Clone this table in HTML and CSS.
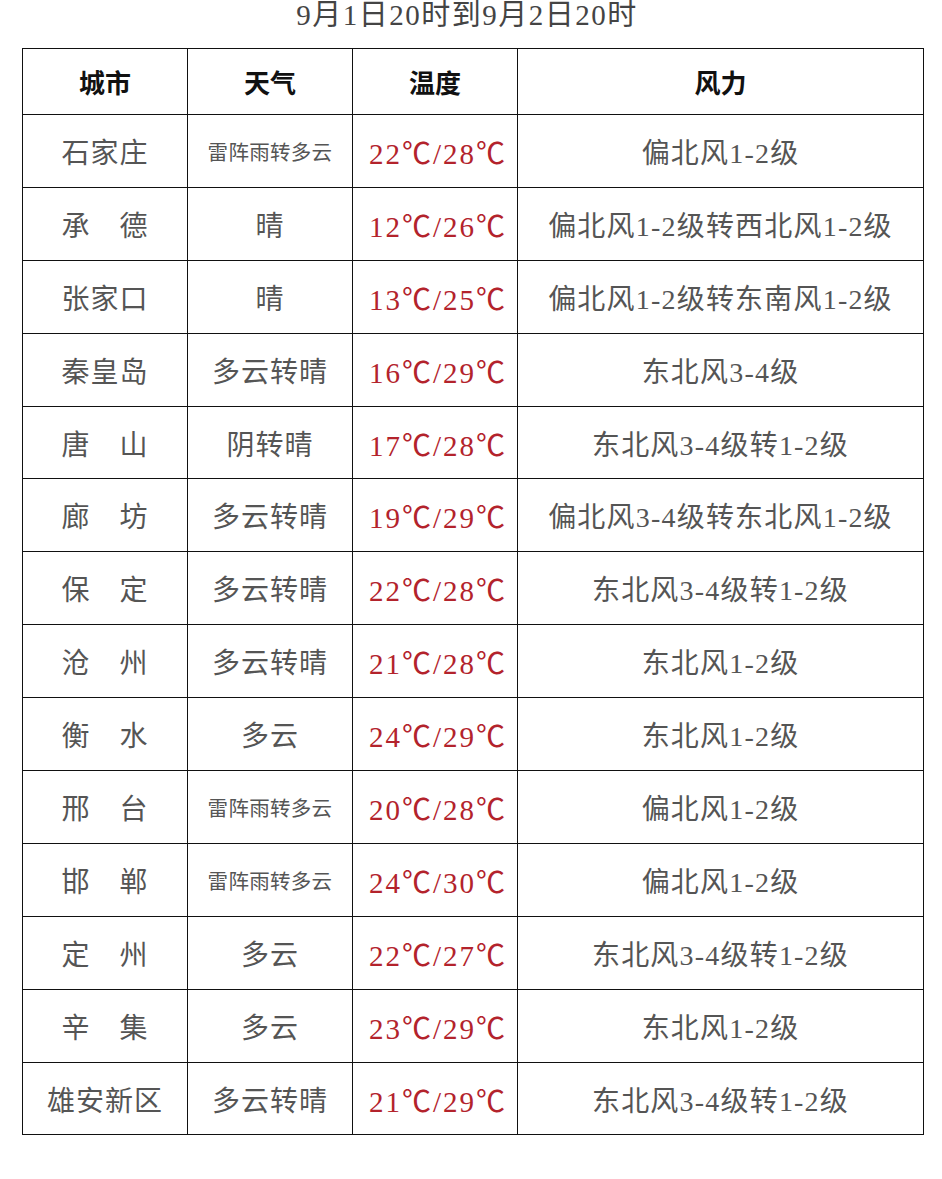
FILE: index.html
```html
<!DOCTYPE html>
<html lang="zh-CN">
<head>
<meta charset="utf-8">
<title>河北天气预报</title>
<link rel="stylesheet" href="styles.css">
</head>
<body>
<div class="page">
  <h1 class="title">9月1日20时到9月2日20时</h1>
  <table class="weather">
    <colgroup>
      <col class="c-city"><col class="c-wx"><col class="c-temp"><col class="c-wind">
    </colgroup>
    <thead>
      <tr><th>城市</th><th>天气</th><th>温度</th><th>风力</th></tr>
    </thead>
    <tbody>
      <tr><td>石家庄</td><td class="small">雷阵雨转多云</td><td class="temp">22℃/28℃</td><td>偏北风1-2级</td></tr>
      <tr><td>承　德</td><td>晴</td><td class="temp">12℃/26℃</td><td>偏北风1-2级转西北风1-2级</td></tr>
      <tr><td>张家口</td><td>晴</td><td class="temp">13℃/25℃</td><td>偏北风1-2级转东南风1-2级</td></tr>
      <tr><td>秦皇岛</td><td>多云转晴</td><td class="temp">16℃/29℃</td><td>东北风3-4级</td></tr>
      <tr><td>唐　山</td><td>阴转晴</td><td class="temp">17℃/28℃</td><td>东北风3-4级转1-2级</td></tr>
      <tr><td>廊　坊</td><td>多云转晴</td><td class="temp">19℃/29℃</td><td>偏北风3-4级转东北风1-2级</td></tr>
      <tr><td>保　定</td><td>多云转晴</td><td class="temp">22℃/28℃</td><td>东北风3-4级转1-2级</td></tr>
      <tr><td>沧　州</td><td>多云转晴</td><td class="temp">21℃/28℃</td><td>东北风1-2级</td></tr>
      <tr><td>衡　水</td><td>多云</td><td class="temp">24℃/29℃</td><td>东北风1-2级</td></tr>
      <tr><td>邢　台</td><td class="small">雷阵雨转多云</td><td class="temp">20℃/28℃</td><td>偏北风1-2级</td></tr>
      <tr><td>邯　郸</td><td class="small">雷阵雨转多云</td><td class="temp">24℃/30℃</td><td>偏北风1-2级</td></tr>
      <tr><td>定　州</td><td>多云</td><td class="temp">22℃/27℃</td><td>东北风3-4级转1-2级</td></tr>
      <tr><td>辛　集</td><td>多云</td><td class="temp">23℃/29℃</td><td>东北风1-2级</td></tr>
      <tr><td>雄安新区</td><td>多云转晴</td><td class="temp">21℃/29℃</td><td>东北风3-4级转1-2级</td></tr>
    </tbody>
  </table>
</div>
</body>
</html>
```
FILE: styles.css
```css
html, body {
  margin: 0;
  padding: 0;
  background: #ffffff;
}
.page {
  width: 942px;
  height: 1179px;
  overflow: hidden;
  font-family: "Liberation Serif", "Noto Sans CJK SC", serif;
}
.title {
  margin: 0;
  height: 48px;
  line-height: 30px;
  text-align: center;
  font-size: 29px;
  font-weight: normal;
  letter-spacing: 1.5px;
  color: #444444;
  transform: translateX(-4px);
}
.weather {
  margin-left: 22px;
  width: 901px;
  table-layout: fixed;
  border-collapse: collapse;
}
.c-city, .c-wx, .c-temp { width: 165px; }
.c-wind { width: 406px; }
.weather th,
.weather td {
  border: 1.5px solid #111111;
  text-align: center;
  vertical-align: middle;
  padding: 0;
  white-space: nowrap;
}
.weather th {
  height: 65px;
  font-size: 26px;
  font-weight: bold;
  color: #111111;
}
.weather td {
  height: 71.9px;
  font-size: 28px;
  letter-spacing: 1px;
  color: #555555;
}
.weather td.small {
  font-size: 20.5px;
  letter-spacing: 0.3px;
}
.weather td.temp {
  color: #b3232c;
  font-size: 29px;
  letter-spacing: 2px;
  padding-left: 6px;
}
.weather td:last-child {
  font-size: 28px;
  letter-spacing: 1.2px;
}
```
